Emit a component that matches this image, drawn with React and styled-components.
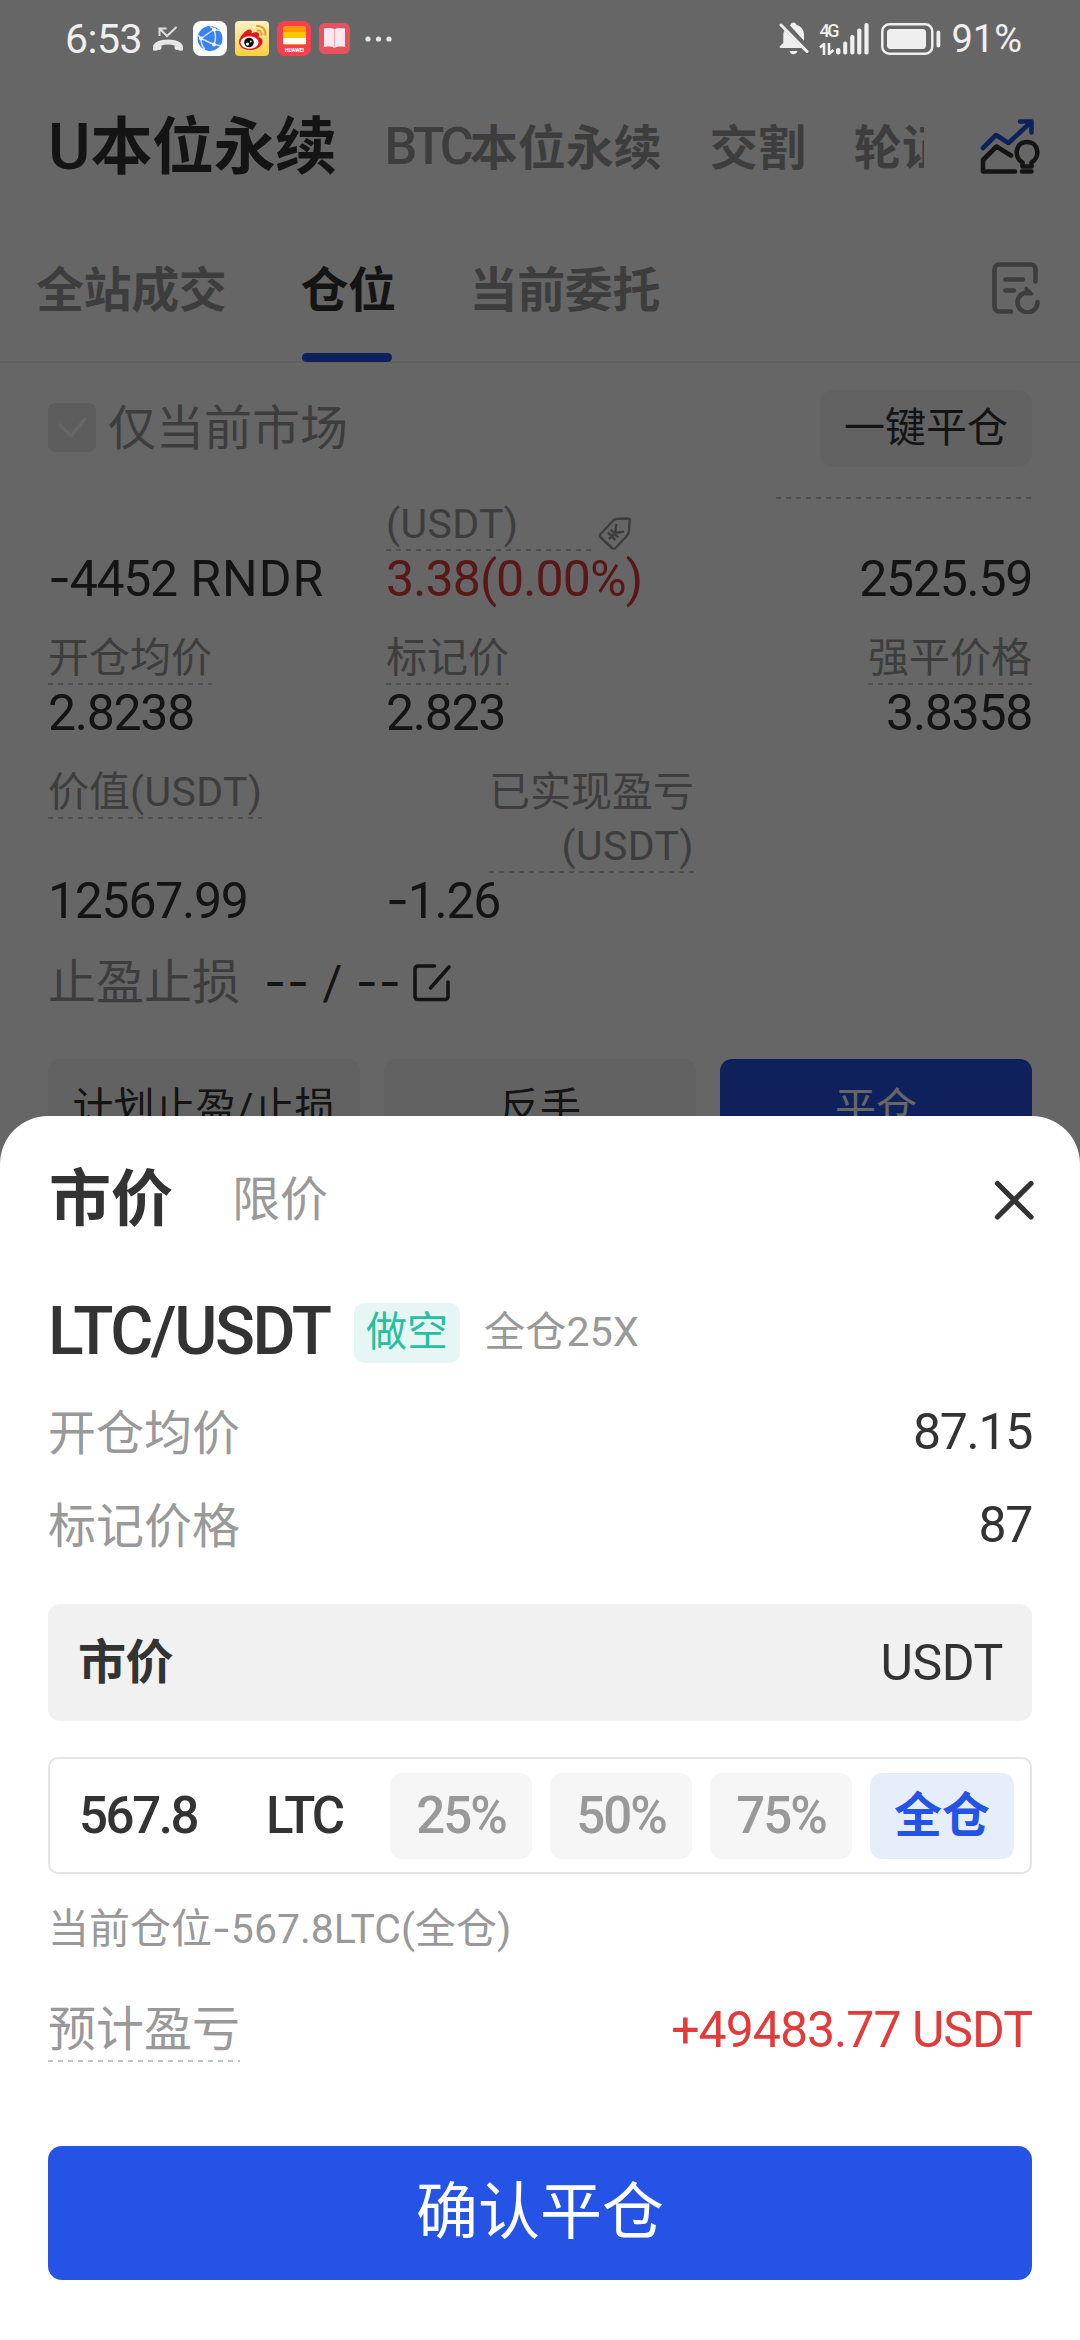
import React from 'react';
import styled, { createGlobalStyle, css } from 'styled-components';

export default function App() {
  return (
    <>
      <GlobalStyle />
      <StyledScreen>
        <PositionsPage />
        <StyledScrim />
        <StatusBar />
        <CloseSheet />
      </StyledScreen>
    </>
  );
}

// Number with a wide minus in front
const Signed = ({ children }) => (
  <>
    <StyledDash>-</StyledDash>
    {children}
  </>
);

const StatusBar = () => (
  <StyledStatusBar>
    <StyledStatusGroup>
      <StyledClock>6:53</StyledClock>
      <MissedCallIcon />
      <StyledAppIcons>
        <GlobeAppIcon />
        <WeiboAppIcon />
        <WalletAppIcon />
        <BookAppIcon />
      </StyledAppIcons>
      <MoreIcon />
    </StyledStatusGroup>
    <StyledStatusGroup>
      <BellOffIcon />
      <StyledNetwork>
        <StyledNetworkType>4G</StyledNetworkType>
        <DataArrowsIcon />
      </StyledNetwork>
      <SignalIcon />
      <BatteryIcon />
      <StyledPercent>91%</StyledPercent>
    </StyledStatusGroup>
  </StyledStatusBar>
);

const markets = [
  { latin: 'BTC', name: '本位永续' },
  { name: '交割' },
  { name: '轮证' },
];

const orderTabs = ['全站成交', '仓位', '当前委托'];

const PositionsPage = () => (
  <StyledPage>
    <StyledMarketBar>
      <StyledMarketTabs>
        <StyledMarketTab $active>
          <StyledLatin $size={65} $track={0}>
            U
          </StyledLatin>
          本位永续
        </StyledMarketTab>
        {markets.map(({ latin, name }) => (
          <StyledMarketTab key={name}>
            {latin && (
              <StyledLatin $size={52} $track={-4}>
                {latin}
              </StyledLatin>
            )}
            {name}
          </StyledMarketTab>
        ))}
      </StyledMarketTabs>
      <TrendIcon />
    </StyledMarketBar>
    <StyledOrderBar>
      <StyledOrderTabs>
        {orderTabs.map(tab => (
          <StyledOrderTab key={tab} $active={tab === '仓位'}>
            {tab}
          </StyledOrderTab>
        ))}
      </StyledOrderTabs>
      <HistoryIcon />
    </StyledOrderBar>
    <StyledFilterBar>
      <StyledCheckLabel>
        <StyledCheckbox>
          <svg width="48" height="48" viewBox="0 0 48 48" fill="none">
            <path
              d="M12 22l11 11 14-17"
              stroke="#fff"
              strokeWidth="3.5"
              strokeLinecap="round"
            />
          </svg>
        </StyledCheckbox>
        仅当前市场
      </StyledCheckLabel>
      <StyledCloseAll>一键平仓</StyledCloseAll>
    </StyledFilterBar>
    <Position />
  </StyledPage>
);

const Position = () => (
  <StyledPosition>
    <StyledMetricRow>
      <span />
      <StyledLabelCell>
        <StyledMetricLabel $width={206}>
          <StyledCode>(USDT)</StyledCode>
        </StyledMetricLabel>
        <TagIcon />
      </StyledLabelCell>
      <StyledMetricLabel $width={256} $end />
      <StyledMetricValue>
        <Signed>4452</Signed>
        <StyledUnit> RNDR</StyledUnit>
      </StyledMetricValue>
      <StyledMetricValue $loss>3.38(0.00%)</StyledMetricValue>
      <StyledMetricValue $end>2525.59</StyledMetricValue>
    </StyledMetricRow>
    <StyledMetricRow>
      <StyledMetricLabel>开仓均价</StyledMetricLabel>
      <StyledMetricLabel>标记价</StyledMetricLabel>
      <StyledMetricLabel $end>强平价格</StyledMetricLabel>
      <StyledMetricValue>2.8238</StyledMetricValue>
      <StyledMetricValue>2.823</StyledMetricValue>
      <StyledMetricValue $end>3.8358</StyledMetricValue>
    </StyledMetricRow>
    <StyledMetricRow>
      <StyledMetricLabel>
        价值<StyledCode>(USDT)</StyledCode>
      </StyledMetricLabel>
      <StyledMetricLabel $end>
        已实现盈亏
        <br />
        <StyledCode>(USDT)</StyledCode>
      </StyledMetricLabel>
      <span />
      <StyledMetricValue>12567.99</StyledMetricValue>
      <StyledMetricValue>
        <Signed>1.26</Signed>
      </StyledMetricValue>
    </StyledMetricRow>
    <StyledStopRow>
      止盈止损
      <StyledStopValue>
        <StyledDash>--</StyledDash> / <StyledDash>--</StyledDash>
      </StyledStopValue>
      <EditIcon />
    </StyledStopRow>
    <StyledActions>
      <StyledAction>计划止盈/止损</StyledAction>
      <StyledAction>反手</StyledAction>
      <StyledAction $primary>平仓</StyledAction>
    </StyledActions>
  </StyledPosition>
);

const CloseSheet = () => (
  <StyledSheet>
    <StyledSheetHead>
      <StyledSheetTitle>市价</StyledSheetTitle>
      <StyledSheetTab>限价</StyledSheetTab>
      <CloseIcon />
    </StyledSheetHead>
    <StyledPairRow>
      <StyledPair>LTC/USDT</StyledPair>
      <StyledSide>做空</StyledSide>
      <StyledLeverage>全仓25X</StyledLeverage>
    </StyledPairRow>
    <StyledInfoRow>
      <StyledInfoLabel>开仓均价</StyledInfoLabel>
      <StyledInfoValue>87.15</StyledInfoValue>
    </StyledInfoRow>
    <StyledInfoRow>
      <StyledInfoLabel>标记价格</StyledInfoLabel>
      <StyledInfoValue>87</StyledInfoValue>
    </StyledInfoRow>
    <StyledPriceField>
      <b>市价</b>
      <span>USDT</span>
    </StyledPriceField>
    <StyledAmountField>
      <StyledAmount>567.8</StyledAmount>
      <StyledAmountUnit>LTC</StyledAmountUnit>
      <StyledChips>
        <StyledChip>25%</StyledChip>
        <StyledChip>50%</StyledChip>
        <StyledChip>75%</StyledChip>
        <StyledChip $active>全仓</StyledChip>
      </StyledChips>
    </StyledAmountField>
    <StyledNote>
      当前仓位
      <Signed>567.8LTC(全仓)</Signed>
    </StyledNote>
    <StyledProfitRow>
      <StyledProfitLabel>预计盈亏</StyledProfitLabel>
      <StyledProfit>+49483.77 USDT</StyledProfit>
    </StyledProfitRow>
    <StyledConfirm>确认平仓</StyledConfirm>
  </StyledSheet>
);

// Icons

const MissedCallIcon = () => (
  <StyledCallSvg width="32" height="26" viewBox="0 0 32 26" fill="none">
    <path d="M7.500 10V2.500h7M8 3l7 7L24.500 1" stroke="#ddd" strokeWidth="2" />
    <path
      d="M1 21c0-4 6-7.500 15-7.500S31 17 31 21v2.500c0 1-1 1.500-2 1.300l-5-1c-1-.2-1.500-1-1.500-2V19.500c-4-1.300-9-1.300-13 0v2.300c0 1-.5 1.800-1.500 2l-5 1c-1 .2-2-.3-2-1.300z"
      fill="#e6e6e6"
    />
  </StyledCallSvg>
);

const GlobeAppIcon = () => (
  <svg width="34" height="35" viewBox="0 0 34 35" fill="none">
    <rect width="34" height="35" rx="8" fill="#fff" />
    <circle cx="17" cy="17.500" r="12.500" fill="#3b82ea" />
    <path
      d="M8 17.500L21 8.500M8 17.500l13 6M21 8.500c2 5 2 10 0 15M8 17.500c0 4 1 8 4 11M21 8.500l-4-3.500M21 8.500l6 1M21 23.500l6 1M5 14l3 3.500"
      stroke="#cfe2ff"
      strokeWidth="1.500"
    />
    <circle cx="8" cy="17.500" r="2" fill="#fff" />
    <circle cx="21" cy="8.500" r="2" fill="#fff" />
    <circle cx="21" cy="23.500" r="2" fill="#fff" />
  </svg>
);

const WeiboAppIcon = () => (
  <svg width="34" height="35" viewBox="0 0 34 35" fill="none">
    <defs>
      <linearGradient id="weibo" x1="0" y1="0" x2="0" y2="1">
        <stop offset="0" stopColor="#fdf0c4" />
        <stop offset="1" stopColor="#f8cf3f" />
      </linearGradient>
    </defs>
    <rect width="34" height="35" rx="4" fill="url(#weibo)" />
    <path
      d="M4 21c0-5 7-13 11-12.500 2 .3 2 2.500 1.500 4 3-1.500 7-2 7.500.8.200 1-.2 2-.5 2.700 2.500.8 4.500 2.300 4 5C26.500 26 21 29 15 29S4 26 4 21z"
      fill="#e1161c"
    />
    <ellipse cx="14.500" cy="21.500" rx="9" ry="6.200" fill="#fff" />
    <circle cx="14" cy="21.500" r="4.800" fill="#0c0c0c" />
    <circle cx="12.500" cy="23" r="1.600" fill="#fff" />
    <circle cx="15.800" cy="20.500" r=".9" fill="#fff" />
    <path
      d="M22 5c5-.5 9 3.500 8.300 9M22.500 9.500c2.700-.2 4.300 1.600 4 4.300"
      stroke="#f09a22"
      strokeWidth="2"
      strokeLinecap="round"
    />
  </svg>
);

const WalletAppIcon = () => (
  <svg width="34" height="35" viewBox="0 0 34 35">
    <rect width="34" height="35" rx="8" fill="#f5414f" />
    <rect x="6" y="5" width="23" height="19" rx="2.500" fill="#ff9a00" />
    <rect x="6" y="11" width="23" height="6" fill="#ffc800" />
    <rect x="6" y="17" width="23" height="6" fill="#fff" />
    <text
      x="17.500"
      y="30.500"
      fill="#fff"
      fontFamily="Inter, sans-serif"
      fontSize="4.600"
      fontWeight="800"
      textAnchor="middle"
    >
      HUAWEI
    </text>
  </svg>
);

const BookAppIcon = () => (
  <svg width="31" height="31" viewBox="0 0 31 31">
    <rect width="31" height="31" rx="6" fill="#e8525c" />
    <path
      d="M5 5.500c4-1 8-.8 10.500.8C18 4.700 22 4.500 26 5.500V24c-4-.8-8-.6-10.500 1C13 23.400 9 23.200 5 24z"
      fill="#ffe9ee"
    />
    <path d="M15.500 6.300V25" stroke="#f5b3bf" strokeWidth="1.500" />
  </svg>
);

const MoreIcon = () => (
  <svg width="28" height="6" viewBox="0 0 28 6" fill="#e6e6e6">
    <circle cx="3" cy="3" r="2.600" />
    <circle cx="13.500" cy="3" r="2.600" />
    <circle cx="24" cy="3" r="2.600" />
  </svg>
);

const BellOffIcon = () => (
  <svg width="30" height="33" viewBox="0 0 30 33" fill="none">
    <path
      d="M11 3.500C12 1.500 13 .5 14.500.5s2.500 1 3 2.500c4.500 1.200 7.500 5 7.500 9.500v6.300zM5.500 8.500L23 26H2c-1.200 0-1.700-1-1-2l3.300-3V12c0-1.300.4-2.400 1.200-3.500zM10.500 29h8c-.7 2-2 3.300-4 3.300s-3.300-1.300-4-3.300z"
      fill="#efefef"
    />
    <path
      d="M2 3l26 26.500"
      stroke="#efefef"
      strokeWidth="3"
      strokeLinecap="round"
    />
  </svg>
);

const DataArrowsIcon = () => (
  <svg width="16" height="12" viewBox="0 0 16 12" fill="none">
    <path d="M1 4.500L5 1v11M10 0v11l4.500-4" stroke="#efefef" strokeWidth="2.600" />
  </svg>
);

const SignalIcon = () => (
  <svg width="34" height="32" viewBox="0 0 34 32" fill="#efefef">
    <rect x="0" y="25" width="4.400" height="6.500" rx="2" />
    <rect x="7.200" y="18.500" width="4" height="13" rx="1.800" />
    <rect x="14.200" y="12" width="4.200" height="19.500" rx="1.800" />
    <rect x="21.200" y="5.500" width="4.200" height="26" rx="1.800" />
    <rect x="28.400" y="0" width="4.200" height="31.500" rx="1.800" />
  </svg>
);

const BatteryIcon = () => (
  <StyledBatterySvg width="60" height="32" viewBox="0 0 60 32" fill="none">
    <rect
      x="1.300"
      y="1.300"
      width="50"
      height="29.400"
      rx="7"
      stroke="#efefef"
      strokeWidth="2.500"
    />
    <rect x="6" y="6" width="39" height="20" rx="3.500" fill="#efefef" />
    <rect x="55.500" y="7.500" width="3.800" height="17" rx="1.900" fill="#efefef" />
  </StyledBatterySvg>
);

const TrendIcon = () => (
  <svg width="60" height="56" viewBox="0 0 60 56" fill="none">
    <g strokeWidth="4.600" strokeLinecap="round" strokeLinejoin="round">
      <path
        d="M3 29l13-13 12.500 8L51 3M40 2.500h11.500v11"
        stroke="#2453e6"
      />
      <path
        d="M31 36.500L16.500 27.500 3 41v11.500h32M42 52.500h9.500M42.500 47.500v-4c-9-5-7.500-20.500 4.500-20.500s13.500 15.500 4.500 20.500v4z"
        stroke="#333"
      />
    </g>
  </svg>
);

const HistoryIcon = () => (
  <svg width="48" height="52" viewBox="0 0 48 52" fill="none">
    <g
      stroke="#999"
      strokeWidth="4.600"
      strokeLinecap="round"
      strokeLinejoin="round"
    >
      <path d="M19 49.500H7a4.500 4.500 0 0 1-4.500-4.500V7A4.500 4.500 0 0 1 7 2.500h32A4.500 4.500 0 0 1 43.500 7v12.500M13.500 17.500H31M13.500 28.500H22" />
      <path d="M32 31a10 10 0 1 0 13.500 9" />
    </g>
    <path d="M34 26v6h6z" fill="#999" stroke="#999" strokeWidth="3" strokeLinejoin="round" />
  </svg>
);

const TagIcon = () => (
  <svg width="34" height="34" viewBox="0 0 34 34" fill="none">
    <g stroke="#999" strokeWidth="2.400" strokeLinejoin="round">
      <path d="M14.500 4.500C16 2.500 17 1.800 19.500 1.800L30 1.500c1 0 1.700.7 1.700 1.700L31 14c-.2 2.500-1 3.700-2.500 5.200L17.500 31c-1.200 1.200-2.300 1.200-3.500 0L2.800 20.500c-1.200-1.200-1.200-2.300-.3-3.500z" />
      <path
        d="M-5.500-8L0-1l5.500-7M0-1v9M-5.500 0h11M-5.500 4h11"
        transform="translate(16.500 16.500) rotate(45)"
      />
    </g>
  </svg>
);

const EditIcon = () => (
  <svg width="40" height="38" viewBox="0 0 40 38" fill="none">
    <path
      d="M21.500 2H5a3 3 0 0 0-3 3v27.500a3 3 0 0 0 3 3h27a3 3 0 0 0 3-3V18M17.500 24L36 3"
      stroke="#333"
      strokeWidth="3.600"
      strokeLinecap="round"
    />
  </svg>
);

const CloseIcon = () => (
  <StyledCloseSvg width="40" height="40" viewBox="0 0 40 40" fill="none">
    <path
      d="M3.500 3.500l33.500 33.500M37 3.500L3.500 37"
      stroke="#333"
      strokeWidth="5.200"
      strokeLinecap="round"
    />
  </StyledCloseSvg>
);

// Shared styles
const spread = css`
  display: flex;
  align-items: center;
  justify-content: space-between;
`;

const center = css`
  display: flex;
  align-items: center;
  justify-content: center;
`;

const dashed = css`
  background: repeating-linear-gradient(
      to right,
      #c4c4c4 0 5px,
      transparent 5px 10px
    )
    left bottom / 100% 2px no-repeat;
`;

const resetButton = css`
  ${center}
  border: none;
  padding: 0;
  font-family: inherit;
  line-height: 1.2;
  color: #333;
`;

const GlobalStyle = createGlobalStyle`
  body {
    margin: 0;
    font-family: Roboto, 'Noto Sans CJK SC', sans-serif;
    line-height: 1.2;
    color: #333;
  }

  * {
    box-sizing: border-box;
  }

  svg {
    display: block;
    flex: none;
  }
`;

const StyledScreen = styled.div`
  position: relative;
  width: 1080px;
  height: 2340px;
  overflow: hidden;
  background: #fff;
  white-space: nowrap;
`;

const StyledScrim = styled.div`
  position: absolute;
  inset: 0;
  background: rgba(0, 0, 0, 0.6);
`;

const StyledDash = styled.span`
  font-family: Inter, sans-serif;
  line-height: 0;
`;

const StyledLatin = styled.span`
  padding-bottom: 3px;
  font-size: ${({ $size }) => $size}px;
  font-weight: 500;
  letter-spacing: ${({ $track }) => $track}px;
  line-height: 1;
`;

// Status bar

const StyledStatusBar = styled.header`
  ${spread}
  position: absolute;
  top: 0;
  left: 0;
  right: 0;
  height: 77px;
  padding: 0 58px 0 65px;
  color: #efefef;
`;

const StyledStatusGroup = styled.div`
  display: flex;
  align-items: center;
`;

const StyledClock = styled.span`
  width: 87px;
  padding-top: 3px;
  font-size: 41px;
  letter-spacing: -0.5px;
`;

const StyledCallSvg = styled.svg`
  margin-right: 9px;
`;

const StyledAppIcons = styled.div`
  display: flex;
  align-items: center;
  gap: 8px;
  margin-right: 15px;
`;

const StyledNetwork = styled.div`
  display: flex;
  flex-direction: column;
  gap: 4px;
  width: 17px;
  margin-left: 10px;
`;

const StyledNetworkType = styled.span`
  font-size: 18px;
  font-weight: 500;
  line-height: 16px;
  letter-spacing: -2.5px;
`;

const StyledBatterySvg = styled.svg`
  margin: 0 10px 0 11px;
`;

const StyledPercent = styled.span`
  padding-top: 3px;
  font-size: 38px;
`;

// Positions page

const StyledPage = styled.main`
  padding-top: 80px;
`;

const StyledMarketBar = styled.div`
  ${spread}
  height: 134px;
  padding: 0 40px 0 48px;
`;

const StyledMarketTabs = styled.nav`
  display: flex;
  align-items: center;
  gap: 48px;
  width: 876px;
  overflow: hidden;
`;

const StyledMarketTab = styled.span`
  display: flex;
  flex: none;
  align-items: center;
  height: 90px;
  padding-top: 3px;
  font-size: ${({ $active }) => ($active ? 62 : 48)}px;
  font-weight: 700;
  letter-spacing: ${({ $active }) => ($active ? -0.5 : 0)}px;
  color: ${({ $active }) => ($active ? '#333' : '#999')};
`;

const StyledOrderBar = styled.div`
  ${spread}
  height: 149px;
  padding: 0 40px 0 36px;
  border-bottom: 2px solid #f2f2f2;
`;

const StyledOrderTabs = styled.nav`
  display: flex;
  gap: 74px;
`;

const StyledOrderTab = styled.span`
  ${center}
  position: relative;
  height: 149px;
  padding-top: 6px;
  font-size: 48px;
  font-weight: 700;
  letter-spacing: -0.4px;
  color: ${({ $active }) => ($active ? '#333' : '#999')};

  &::after {
    content: '';
    display: ${({ $active }) => ($active ? 'block' : 'none')};
    position: absolute;
    left: 2px;
    bottom: 0;
    width: 90px;
    height: 9px;
    border-radius: 5px;
    background: #2453e6;
  }
`;

const StyledFilterBar = styled.div`
  ${spread}
  padding: 27px 48px 30px;
`;

const StyledCheckLabel = styled.label`
  display: flex;
  align-items: center;
  gap: 12px;
  font-size: 48px;
  line-height: 76px;
  color: #999;
`;

const StyledCheckbox = styled.span`
  width: 48px;
  height: 49px;
  margin-bottom: 2px;
  border-radius: 7px;
  background: #e9e9e9;
`;

const StyledCloseAll = styled.button`
  ${resetButton}
  width: 212px;
  height: 77px;
  border-radius: 14px;
  background: #f6f6f6;
  font-size: 41px;
`;

const StyledPosition = styled.section`
  padding: 0 48px;
`;

const StyledMetricRow = styled.div`
  display: grid;
  grid-template-columns: 338px 308px 338px;
  align-items: start;
  margin-bottom: 24px;
`;

const StyledLabelCell = styled.div`
  display: flex;
  align-items: flex-end;
  gap: 6px;
`;

const StyledMetricLabel = styled.span`
  ${dashed}
  justify-self: ${({ $end }) => ($end ? 'end' : 'start')};
  width: ${({ $width }) => ($width ? `${$width}px` : 'auto')};
  min-height: 2px;
  font-size: 41px;
  line-height: 54px;
  text-align: ${({ $end }) => ($end ? 'right' : 'left')};
  color: #999;
`;

const StyledCode = styled.span`
  letter-spacing: 0.4px;
`;

const StyledMetricValue = styled.span`
  justify-self: ${({ $end }) => ($end ? 'end' : 'start')};
  font-size: 50px;
  line-height: 56px;
  letter-spacing: ${({ $loss }) => ($loss ? -0.9 : -1.3)}px;
  color: ${({ $loss }) => ($loss ? '#e13b3b' : '#333')};
`;

const StyledUnit = styled.span`
  letter-spacing: 1px;
  white-space: pre;
`;

const StyledStopRow = styled.div`
  display: flex;
  align-items: center;
  height: 64px;
  margin-top: -2px;
  font-size: 48px;
  color: #999;
`;

const StyledStopValue = styled.span`
  width: 145px;
  margin: 0 4px 0 24px;
  font-size: 48px;
  letter-spacing: 0.8px;
  color: #333;
`;

const StyledActions = styled.div`
  display: grid;
  grid-template-columns: repeat(3, 1fr);
  gap: 24px;
  margin-top: 44px;
`;

const StyledAction = styled.button`
  ${resetButton}
  height: 98px;
  padding-top: 2px;
  border-radius: 12px;
  background: ${({ $primary }) => ($primary ? '#2453e6' : '#f5f5f5')};
  color: ${({ $primary }) => ($primary ? '#fff' : '#333')};
  font-size: 41px;
`;

// Close position sheet

const StyledSheet = styled.section`
  position: absolute;
  left: 0;
  right: 0;
  bottom: 0;
  height: 1224px;
  padding: 0 48px;
  border-radius: 48px 48px 0 0;
  background: #fff;
`;

const StyledSheetHead = styled.div`
  display: flex;
  align-items: center;
  height: 168px;
`;

const StyledSheetTitle = styled.h2`
  margin: 0 59px 0 1px;
  font-size: 62px;
  font-weight: 700;
`;

const StyledSheetTab = styled.span`
  font-size: 48px;
  color: #999;
`;

const StyledCloseSvg = styled.svg`
  margin: 0 -2px 0 auto;
`;

const StyledPairRow = styled.div`
  display: flex;
  align-items: center;
  height: 98px;
`;

const StyledPair = styled.span`
  width: 306px;
  padding-bottom: 3px;
  font-size: 66px;
  font-weight: 500;
  letter-spacing: -2.4px;
`;

const StyledSide = styled.span`
  ${center}
  width: 106px;
  height: 60px;
  margin-right: 24px;
  border-radius: 10px;
  background: #e6f6f4;
  color: #26bfa0;
  font-size: 41px;
`;

const StyledLeverage = styled.span`
  font-size: 41px;
  letter-spacing: 0.2px;
  color: #999;
`;

const StyledInfoRow = styled.div`
  ${spread}
  height: 93px;
  padding-top: 7px;
`;

const StyledInfoLabel = styled.span`
  padding-top: 4px;
  font-size: 48px;
  color: #999;
`;

const StyledInfoValue = styled.span`
  font-size: 50px;
  letter-spacing: -1.3px;
  color: #333;
`;

const StyledPriceField = styled.div`
  ${spread}
  height: 117px;
  margin-top: 36px;
  padding: 0 29px 0 30px;
  border-radius: 12px;
  background: #f1f1f1;
  font-size: 50px;
  letter-spacing: -0.4px;

  b {
    font-size: 48px;
  }
`;

const StyledAmountField = styled.div`
  display: flex;
  align-items: center;
  height: 117px;
  margin-top: 36px;
  padding: 0 16px 0 29px;
  border: 2px solid #e5e5e5;
  border-radius: 10px;
  font-size: 51px;
  font-weight: 500;
`;

const StyledAmount = styled.span`
  width: 187px;
  letter-spacing: -2.4px;
`;

const StyledAmountUnit = styled.span`
  width: 124px;
  letter-spacing: -3px;
`;

const StyledChips = styled.div`
  display: flex;
  gap: 18px;
`;

const StyledChip = styled.button`
  ${resetButton}
  width: 142px;
  height: 86px;
  border-radius: 12px;
  background: #f6f6f6;
  color: #999;
  font-size: 51px;
  font-weight: 500;
  letter-spacing: -2px;
  ${({ $active }) =>
    $active &&
    css`
      width: 144px;
      background: #e6eefc;
      color: #2453e6;
      font-size: 48px;
      font-weight: 700;
      letter-spacing: 0;
    `}
`;

const StyledNote = styled.p`
  margin: 25px 0 0;
  font-size: 41px;
  line-height: 60px;
  color: #999;
`;

const StyledProfitRow = styled.div`
  ${spread}
  height: 64px;
  margin-top: 39px;
`;

const StyledProfitLabel = styled.span`
  ${dashed}
  font-size: 48px;
  line-height: 64px;
  color: #999;
`;

const StyledProfit = styled.span`
  font-size: 50px;
  letter-spacing: -1px;
  color: #e13b3b;
`;

const StyledConfirm = styled.button`
  ${resetButton}
  width: 984px;
  height: 134px;
  margin-top: 84px;
  border-radius: 14px;
  background: #2453e6;
  color: #fff;
  font-size: 62px;
`;
